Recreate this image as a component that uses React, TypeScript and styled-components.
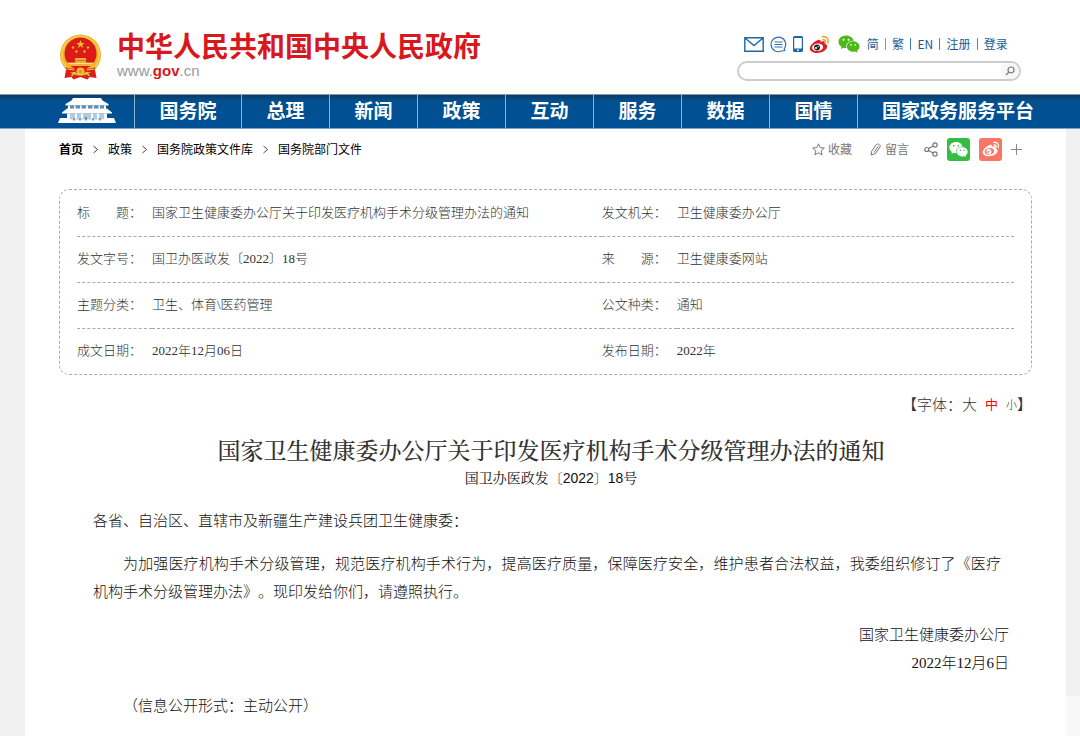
import React from 'react';
import styled, { createGlobalStyle } from 'styled-components';
import { AiFillWechat } from 'react-icons/ai';

const sans = `'Noto Sans CJK SC', sans-serif`;
const song = `'Liberation Serif', 'Noto Sans CJK SC', sans-serif`;

const GlobalStyle = createGlobalStyle`
  *, *::before, *::after { box-sizing: border-box; }
  body {
    margin: 0;
    background: #f1f1f1;
    font-family: ${sans};
    color: #333;
    text-spacing-trim: space-all;
  }
  a { color: inherit; text-decoration: none; }
  button { font: inherit; color: inherit; background: none; border: 0; padding: 0; cursor: pointer; }
  svg { display: block; flex: none; }
`;

const Header = styled.header`
  display: flex;
  justify-content: space-between;
  align-items: flex-start;
  height: 94px;
  padding: 28px 59px 0 59px;
  background: #fff;
`;

const Brand = styled.a`
  display: flex;
  align-items: flex-end;
  gap: 15px;
`;

const BrandText = styled.div`
  display: flex;
  flex-direction: column;
`;

const SiteName = styled.h1`
  margin: 0;
  font-size: 28px;
  line-height: 34px;
  font-weight: 700;
  color: #d7181c;
  white-space: nowrap;
`;

const SiteUrl = styled.span`
  font-family: 'Liberation Sans', sans-serif;
  font-size: 15px;
  line-height: 18px;
  color: #999;
  strong { color: #d7181c; }
`;

const Tools = styled.div`
  display: flex;
  flex-direction: column;
  gap: 5px;
  width: 284px;
  padding-top: 4px;
`;

const ToolRow = styled.div`
  display: flex;
  align-items: center;
  justify-content: space-between;
  height: 24px;
  padding: 0 13px 0 7px;
  font-size: 12px;
  line-height: 24px;
  color: #1a5a96;
`;

const Bar = styled.i<{ $tone: string }>`
  width: 1px;
  height: 12px;
  background: ${p => p.$tone};
`;

const Search = styled.form`
  display: flex;
  align-items: center;
  height: 20px;
  border: 2px solid #ccc;
  border-radius: 10px;
  background: #fff;
`;

const SearchInput = styled.input`
  flex: 1;
  min-width: 0;
  height: 16px;
  padding: 0 10px;
  border: 0;
  outline: 0;
  background: transparent;
  font: 12px ${sans};
`;

const SearchButton = styled.button`
  display: flex;
  align-items: center;
  justify-content: center;
  width: 18px;
  height: 16px;
  border-radius: 8px;
  background: #f6f6f6;
`;

const Nav = styled.nav`
  display: grid;
  grid-template-columns: 134fr 107fr repeat(7, 88fr) 223fr;
  height: 35px;
  background: linear-gradient(#0b3a66 0, #02508f 6px, #005096 100%);
  border-top: 1px solid #8a9aa8;
  border-bottom: 1px solid #7ba3c6;
`;

const NavLink = styled.a`
  display: flex;
  justify-content: center;
  border-left: 1px solid #8fb0cc;
  font-size: 19px;
  line-height: 30px;
  font-weight: 700;
  color: #fff;
  white-space: nowrap;
  &:last-child { padding-right: 22px; }
`;

const NavHome = styled.a`
  display: flex;
  align-items: flex-end;
  justify-content: flex-end;
  padding: 0 18px 4px 0;
`;

const Sheet = styled.main`
  margin: 0 14px 0 25px;
  padding: 0 34px;
  min-height: calc(100vh - 129px);
  background: #fff;
`;

const TopRow = styled.div`
  display: flex;
  align-items: center;
  justify-content: space-between;
  height: 40px;
  padding-right: 10px;
`;

const Crumbs = styled.nav`
  display: flex;
  align-items: center;
  gap: 8px;
  font-size: 12px;
  line-height: 20px;
  color: #000;
  a:first-child { font-weight: 700; }
`;

const Actions = styled.div`
  display: flex;
  align-items: center;
  font-size: 12px;
  line-height: 20px;
  color: #777;
`;

const Action = styled.button<{ $gap: number }>`
  display: flex;
  align-items: center;
  gap: 3px;
  margin-left: ${p => p.$gap}px;
`;

const ShareTile = styled(Action)<{ $bg: string }>`
  justify-content: center;
  width: 23px;
  height: 23px;
  border-radius: 3px;
  background: ${p => p.$bg};
  color: #fff;
`;

const InfoBox = styled.section`
  margin-top: 20px;
  padding: 0 17px;
  border: 1px dashed #aaa;
  border-radius: 10px;
`;

const InfoTable = styled.table`
  width: 100%;
  table-layout: fixed;
  border-collapse: collapse;
  font-family: ${song};
  font-size: 13px;
  line-height: 20px;
  color: #333;
  tr + tr > * { border-top: 1px dashed #aaa; }
  th, td { height: 46px; padding: 0; text-align: left; font-weight: 300; white-space: nowrap; }
`;

const LabelCol = styled.col`
  width: 8%;
`;

const WideCol = styled.col`
  width: 48%;
`;

const FontSizer = styled.div`
  display: flex;
  justify-content: flex-end;
  align-items: center;
  margin-top: 17px;
  font-size: 15px;
  font-weight: 300;
  line-height: 24px;
  color: #333;
`;

const SizeButton = styled.button<{ $size: number; $active?: boolean }>`
  margin-right: ${p => (p.$size === 11 ? 0 : 8)}px;
  font-size: ${p => p.$size}px;
  font-weight: ${p => (p.$active ? 400 : 300)};
  line-height: 24px;
  color: ${p => (p.$active ? '#f00' : '#333')};
`;

const Article = styled.article`
  padding: 18px 23px 0 34px;
  font-family: ${song};
  font-size: 15px;
  font-weight: 300;
  line-height: 28px;
  color: #111;
`;

const Title = styled.h2`
  margin: 0;
  font-family: 'Noto Serif CJK SC', 'Noto Sans CJK SC', serif;
  font-size: 23px;
  line-height: 32px;
  font-weight: 500;
  text-align: center;
  color: #333;
`;

const DocNumber = styled.p`
  margin: 0 0 17px;
  font-family: 'Liberation Sans', 'Noto Serif CJK SC', ${sans};
  font-size: 14px;
  font-weight: 400;
  line-height: 24px;
  text-align: center;
`;

const Para = styled.p<{ $indent?: boolean }>`
  margin: 15px 0 0;
  text-indent: ${p => (p.$indent ? 2 : 0)}em;
  text-align: justify;
  padding-right: 8px;
`;

const Signature = styled.p`
  margin: 15px 0 0;
  text-align: right;
`;

const SideDock = styled.aside`
  position: fixed;
  right: 0;
  bottom: 0;
  width: 14px;
  height: 40px;
  background: #f8f8f8;
`;

const Emblem = () => (
  <svg width="43" height="46" viewBox="0 0 42 46" aria-hidden="true">
    <path d="M7 33 L5 44 L12 43 L14 45.500 L21 43 L28 45.500 L30 43 L37 44 L35 33Z" fill="#d8201c" />
    <circle cx="21" cy="21" r="20.500" fill="#ecb32d" />
    <circle cx="21" cy="21" r="18.600" fill="none" stroke="#f8d04c" strokeWidth="1.500" />
    <circle cx="21" cy="19.500" r="16" fill="#dc1b18" />
    <path d="M21 6l1.100 3h3.100l-2.500 1.900.9 3-2.600-1.800-2.600 1.800.9-3-2.500-1.900h3.100z" fill="#f9c038" />
    <g fill="#f2b23a">
      <circle cx="13.500" cy="13.500" r="1.200" /><circle cx="28.500" cy="13.500" r="1.200" />
      <circle cx="17" cy="17.500" r="1.200" /><circle cx="25" cy="17.500" r="1.200" />
      <path d="M16 24h10l1 2H15zM15.500 26.500h11v2h-11zM8 28.500h26v3.500H8z" />
    </g>
    <path d="M9 29.500h24" stroke="#fbe58a" strokeWidth="1" />
    <path d="M6 33c4 2 7 2 10 1l5 3 5-3c3 1 6 1 10-1l-2 6-7-1-6 4-6-4-7 1z" fill="#dc1b18" />
    <path d="M7 35l8 1M27 36l8-1M12 42l4-4M30 42l-4-4" stroke="#f3c23b" strokeWidth="1.200" />
    <circle cx="21" cy="37.500" r="4" fill="#f3c23b" />
    <circle cx="21" cy="37.500" r="1.800" fill="#e29a25" />
  </svg>
);

const Gate = () => (
  <svg width="58" height="26" viewBox="0 0 58 26" aria-hidden="true">
    <g fill="#fff">
      <path d="M15 0h28l1.500 2.500 6 3.500v1.500h-43V6l6-3.500z" />
      <path d="M10 8h38v3H10z" opacity=".35" />
      <path d="M10 7.500h2v4h-2zM16 7.500h1.500v4H16zM22 7.500h1.500v4H22zM28 7.500h2v4h-2zM34.500 7.500H36v4h-1.500zM40.500 7.500H42v4h-1.500zM46 7.500h2v4h-2z" />
      <path d="M9 10.500h40l5 4v1H4v-1z" />
      <path d="M10 15.500h38v7H10z" opacity=".7" />
      <path d="M9 15.500h3v5H9zM17 15.500h2v5h-2zM23 15.500h2v5h-2zM33 15.500h2v5h-2zM39 15.500h2v5h-2zM46 15.500h3v5h-3z" />
      <path d="M2 20h8l3 1.500h32L48 20h8l2 5H0z" />
    </g>
    <path d="M16 20.500v2M22 20.500v2M28 19v3.500M35 20.500v2M42 20.500v2" stroke="#02508f" />
  </svg>
);

const Envelope = () => (
  <svg width="20" height="15" viewBox="0 0 20 15" fill="none" stroke="#1f66a5" strokeWidth="1.400" aria-hidden="true">
    <path d="M.8.800h18.400v13.400H.8zM1 1l9 7.500L19 1" />
  </svg>
);

const Chat = () => (
  <svg width="17" height="17" viewBox="0 0 17 17" fill="none" stroke="#2e70ab" strokeWidth="1.200" aria-hidden="true">
    <path d="M14.800 14.600l-.6-1.800A7.300 7.300 0 1 0 11.500 15zM4.500 6h8M4.500 8.500h8M4.500 11h8" />
  </svg>
);

const Phone = () => (
  <svg width="10" height="16" viewBox="0 0 10 16" aria-hidden="true">
    <rect width="10" height="16" rx="1.500" fill="#1f66a5" />
    <path d="M1.200 2h7.600v10.500H1.200z" fill="#fff" />
    <circle cx="5" cy="14.200" r=".9" fill="#fff" />
  </svg>
);

const Weibo = ({ size, body, wave, hole, eye }: { size: number; body: string; wave: string; hole: string; eye: string }) => (
  <svg width={size} height={size} viewBox="0 0 24 24" aria-hidden="true">
    <path d="M9.500 7c2-1 4.200-.8 3.700 1.900 2.600-1 5.600-1 4.600 2 5 1.600 3 6.600-1 8.900-4.500 2.600-11 2.600-14.300-.1C-2 16 4 9.500 9.500 7z" fill={body} />
    <ellipse cx="9.800" cy="15.200" rx="6.300" ry="4.300" transform="rotate(-7 9.800 15.200)" fill={hole} />
    <circle cx="9.200" cy="15.400" r="3.400" fill={eye} />
    <circle cx="8" cy="16" r="1.200" fill={hole} />
    <circle cx="10.400" cy="14.500" r=".7" fill={hole} />
    <path d="M15.500 3.200c4.500-1 7.600 3 6.200 7M16 6.600c2-.4 3.300 1.200 2.700 3" fill="none" stroke={wave} strokeWidth="1.800" strokeLinecap="round" />
  </svg>
);

const Magnifier = () => (
  <svg width="10" height="10" viewBox="0 0 10 10" fill="none" stroke="#777" strokeWidth="1.200" aria-hidden="true">
    <circle cx="6" cy="4" r="3" /><path d="M3.800 6.200L1 9" />
  </svg>
);

const Star = () => (
  <svg width="13" height="13" viewBox="0 0 13 13" fill="none" stroke="#777" strokeLinejoin="round" aria-hidden="true">
    <path d="M6.500.8l1.700 3.800 4.100.4-3.100 2.800.9 4.100-3.600-2.100-3.600 2.100.9-4.100L.7 5l4.100-.4z" />
  </svg>
);

const Pencil = () => (
  <svg width="12" height="13" viewBox="0 0 12 13" fill="none" stroke="#777" strokeLinejoin="round" aria-hidden="true">
    <path d="M1 12l.7-3.800L6.500 1.500c1-1.300 4.500.4 3.700 2.300L5.500 10.500zM8.400 3.200L4 9.500" />
  </svg>
);

const Share = () => (
  <svg width="14" height="15" viewBox="0 0 14 15" fill="none" stroke="#777" strokeWidth="1.200" aria-hidden="true">
    <circle cx="2.800" cy="7.500" r="2" /><circle cx="11" cy="3" r="2.100" /><circle cx="11" cy="12" r="2.100" />
    <path d="M4.600 6.600L9 4M4.600 8.500L9 11" />
  </svg>
);

const Plus = () => (
  <svg width="11" height="11" viewBox="0 0 11 11" stroke="#888" aria-hidden="true">
    <path d="M5.500 0v11M0 5.500h11" />
  </svg>
);

const Chevron = () => (
  <svg width="9" height="9" viewBox="0 0 9 9" fill="none" stroke="#444" aria-hidden="true">
    <path d="M2.500 1l4 3.500-4 3.500" />
  </svg>
);

const navItems = ['国务院', '总理', '新闻', '政策', '互动', '服务', '数据', '国情', '国家政务服务平台'];
const crumbs = ['首页', '政策', '国务院政策文件库', '国务院部门文件'];
const rows = [
  ['标　　题：', '国家卫生健康委办公厅关于印发医疗机构手术分级管理办法的通知', '发文机关：', '卫生健康委办公厅'],
  ['发文字号：', '国卫办医政发〔2022〕18号', '来　　源：', '卫生健康委网站'],
  ['主题分类：', '卫生、体育\\医药管理', '公文种类：', '通知'],
  ['成文日期：', '2022年12月06日', '发布日期：', '2022年'],
];

export default function App() {
  return (
    <>
      <GlobalStyle />
      <Header>
        <Brand href="#">
          <Emblem />
          <BrandText>
            <SiteName>中华人民共和国中央人民政府</SiteName>
            <SiteUrl>www.<strong>gov</strong>.cn</SiteUrl>
          </BrandText>
        </Brand>
        <Tools>
          <ToolRow>
            <a href="#" aria-label="邮箱"><Envelope /></a>
            <a href="#" aria-label="留言"><Chat /></a>
            <a href="#" aria-label="手机版"><Phone /></a>
            <a href="#" aria-label="微博"><Weibo size={21} body="#df1f1f" wave="#f39a2d" hole="#fff" eye="#222" /></a>
            <a href="#" aria-label="微信"><AiFillWechat size={24} color="#4cb81a" /></a>
            <a href="#">简</a>
            <Bar $tone="#d08a3c" />
            <a href="#">繁</a>
            <Bar $tone="#3c7fa8" />
            <a href="#">EN</a>
            <Bar $tone="#b0604c" />
            <a href="#">注册</a>
            <Bar $tone="#4c90a8" />
            <a href="#">登录</a>
          </ToolRow>
          <Search onSubmit={e => e.preventDefault()}>
            <SearchInput type="text" aria-label="搜索" />
            <SearchButton type="submit" aria-label="搜索"><Magnifier /></SearchButton>
          </Search>
        </Tools>
      </Header>
      <Nav>
        <NavHome href="#" aria-label="首页"><Gate /></NavHome>
        {navItems.map(item => <NavLink href="#" key={item}>{item}</NavLink>)}
      </Nav>
      <Sheet>
        <TopRow>
          <Crumbs>
            {crumbs.map((crumb, i) => (
              <React.Fragment key={crumb}>
                {i > 0 && <Chevron />}
                <a href="#">{crumb}</a>
              </React.Fragment>
            ))}
          </Crumbs>
          <Actions>
            <Action $gap={0}><Star />收藏</Action>
            <Action $gap={18}><Pencil />留言</Action>
            <Action $gap={15} aria-label="分享"><Share /></Action>
            <ShareTile $gap={9} $bg="#34bd42" aria-label="微信"><AiFillWechat size={21} /></ShareTile>
            <ShareTile $gap={9} $bg="#f97566" aria-label="微博">
              <Weibo size={18} body="#fff" wave="#fff" hole="#f97566" eye="#fff" />
            </ShareTile>
            <Action $gap={9} aria-label="更多"><Plus /></Action>
          </Actions>
        </TopRow>
        <InfoBox>
          <InfoTable>
            <colgroup>
              <LabelCol /><WideCol /><LabelCol /><col />
            </colgroup>
            <tbody>
              {rows.map(([l1, v1, l2, v2]) => (
                <tr key={l1}>
                  <th scope="row">{l1}</th>
                  <td>{v1}</td>
                  <th scope="row">{l2}</th>
                  <td>{v2}</td>
                </tr>
              ))}
            </tbody>
          </InfoTable>
        </InfoBox>
        <FontSizer>
          <span>【字体：</span>
          <SizeButton $size={15}>大</SizeButton>
          <SizeButton $size={13} $active>中</SizeButton>
          <SizeButton $size={11}>小</SizeButton>
          <span>】</span>
        </FontSizer>
        <Article>
          <Title>国家卫生健康委办公厅关于印发医疗机构手术分级管理办法的通知</Title>
          <DocNumber>国卫办医政发〔2022〕18号</DocNumber>
          <Para>各省、自治区、直辖市及新疆生产建设兵团卫生健康委：</Para>
          <Para $indent>
            为加强医疗机构手术分级管理，规范医疗机构手术行为，提高医疗质量，保障医疗安全，维护患者合法权益，我委组织修订了《医疗机构手术分级管理办法》。现印发给你们，请遵照执行。
          </Para>
          <Signature>国家卫生健康委办公厅<br />2022年12月6日</Signature>
          <Para $indent>（信息公开形式：主动公开）</Para>
        </Article>
      </Sheet>
      <SideDock />
    </>
  );
}
